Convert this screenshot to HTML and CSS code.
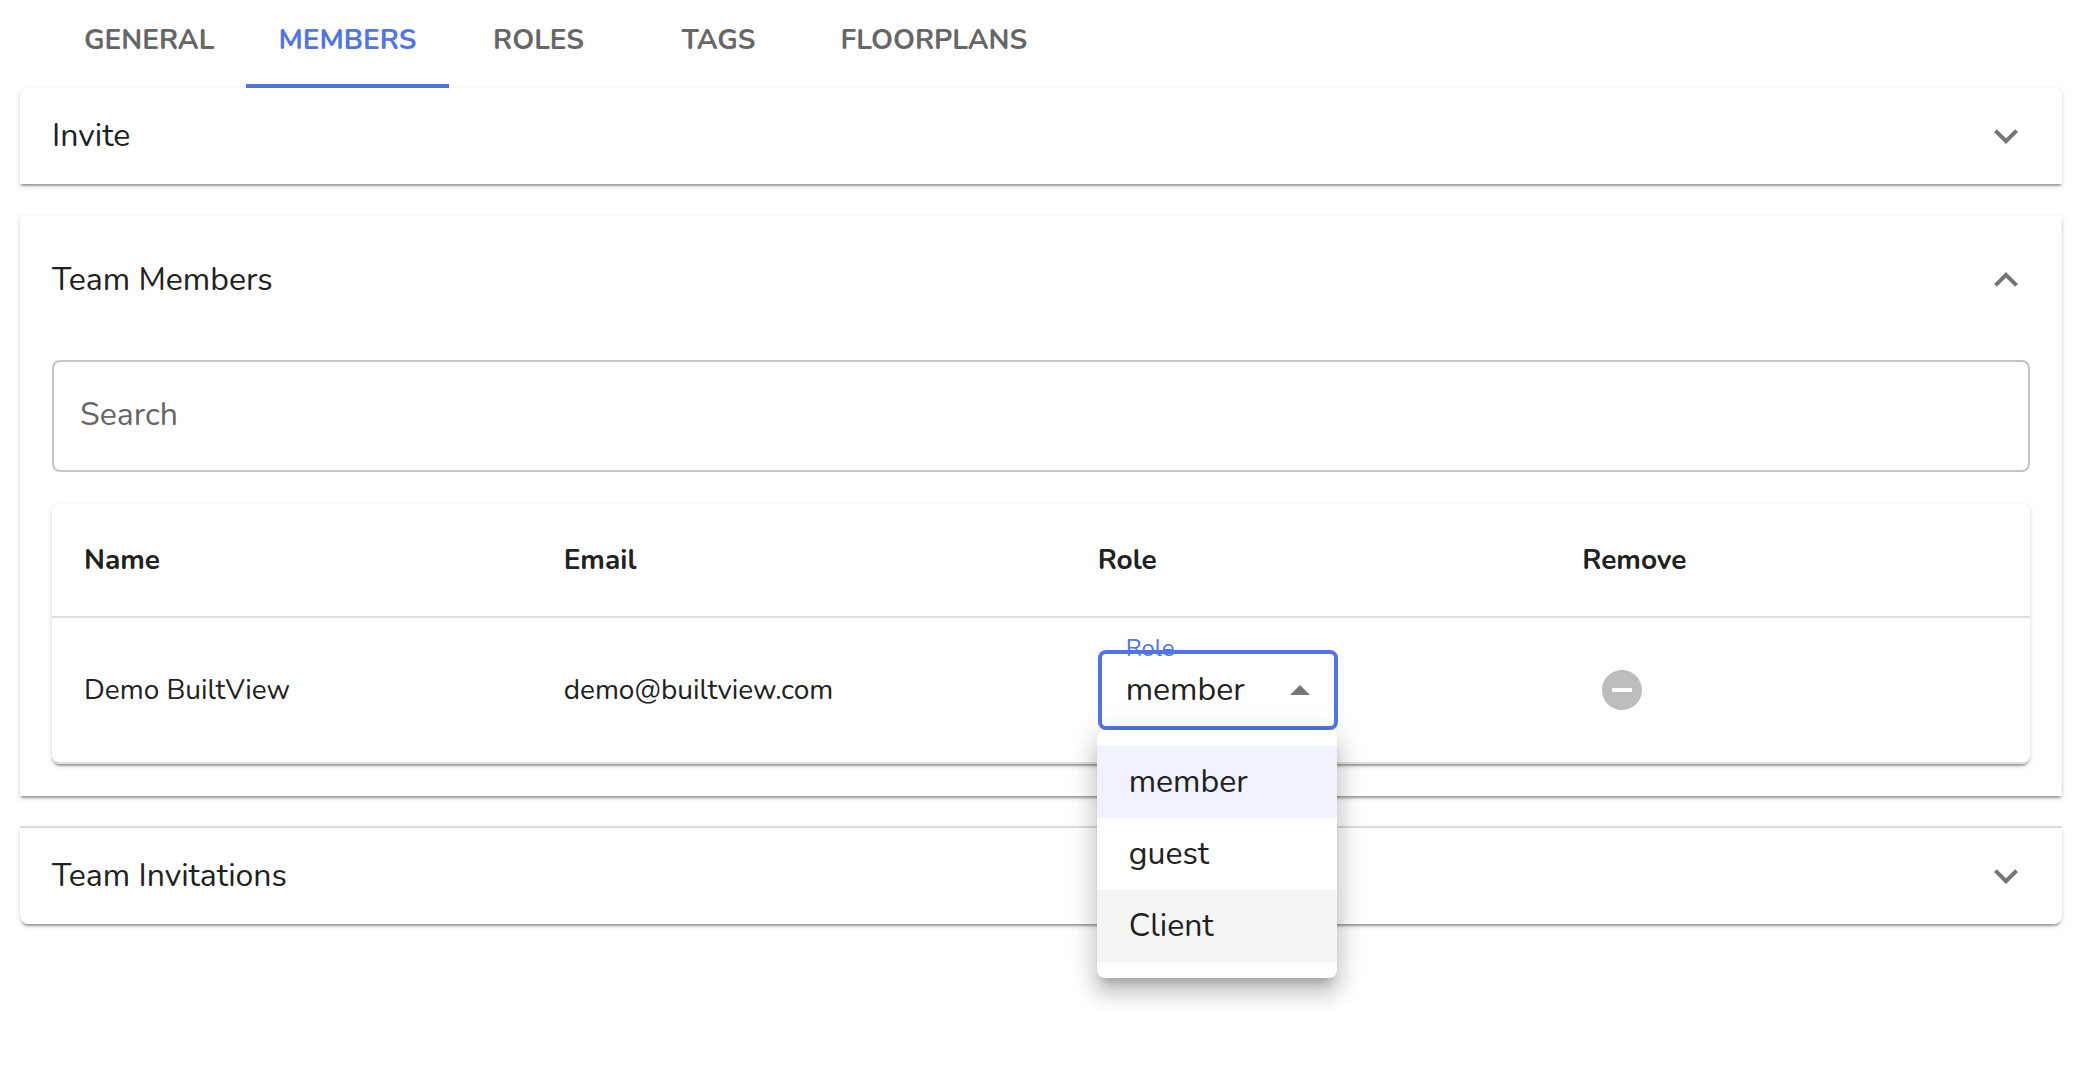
FILE: index.html
```html
<!DOCTYPE html>
<html lang="en">
<head>
<meta charset="utf-8">
<meta name="viewport" content="width=device-width, initial-scale=1">
<title>Members</title>
<link rel="stylesheet" href="styles.css">
</head>
<body>
<nav class="tabs" role="tablist" aria-label="Project settings">
  <button class="tab" type="button" role="tab" aria-selected="false">GENERAL</button>
  <button class="tab tab-active" type="button" role="tab" aria-selected="true">MEMBERS</button>
  <button class="tab" type="button" role="tab" aria-selected="false">ROLES</button>
  <button class="tab" type="button" role="tab" aria-selected="false">TAGS</button>
  <button class="tab" type="button" role="tab" aria-selected="false">FLOORPLANS</button>
</nav>

<main class="panels">
  <section class="panel panel-first">
    <button class="panel-header" type="button" aria-expanded="false">
      <span>Invite</span>
      <svg class="chevron" viewBox="0 0 24 24" aria-hidden="true"><path d="M16.59 8.59 12 13.17 7.41 8.59 6 10l6 6 6-6z"/></svg>
    </button>
  </section>

  <section class="panel panel-open">
    <button class="panel-header panel-header-open" type="button" aria-expanded="true">
      <span>Team Members</span>
      <svg class="chevron" viewBox="0 0 24 24" aria-hidden="true"><path d="m12 8-6 6 1.410 1.410L12 10.830l4.590 4.580L18 14z"/></svg>
    </button>
    <div class="panel-body">
      <input class="search" type="search" placeholder="Search" aria-label="Search">
      <div class="table-card">
        <table class="members">
          <colgroup>
            <col class="col-name"><col class="col-email"><col class="col-role"><col class="col-remove">
          </colgroup>
          <thead>
            <tr><th scope="col">Name</th><th scope="col">Email</th><th scope="col">Role</th><th scope="col">Remove</th></tr>
          </thead>
          <tbody>
            <tr>
              <td>Demo BuiltView</td>
              <td>demo@builtview.com</td>
              <td>
                <div class="role-field">
                  <label class="role-label" for="role">Role</label>
                  <select class="role-select" id="role">
                    <option selected>member</option>
                    <option>guest</option>
                    <option>Client</option>
                  </select>
                  <svg class="role-arrow" viewBox="0 0 20 10" aria-hidden="true"><path d="M0 10 10 0l10 10z"/></svg>
                  <div class="role-menu" role="listbox" aria-label="Role">
                    <button class="role-option role-option-selected" type="button" role="option" aria-selected="true">member</button>
                    <button class="role-option" type="button" role="option" aria-selected="false">guest</button>
                    <button class="role-option role-option-hover" type="button" role="option" aria-selected="false">Client</button>
                  </div>
                </div>
              </td>
              <td>
                <button class="remove" type="button" aria-label="Remove member" disabled>
                  <svg class="remove-icon" viewBox="0 0 24 24" aria-hidden="true"><path d="M12 2C6.480 2 2 6.480 2 12s4.480 10 10 10 10-4.480 10-10S17.520 2 12 2zm5 11H7v-2h10v2z"/></svg>
                </button>
              </td>
            </tr>
          </tbody>
        </table>
      </div>
    </div>
  </section>

  <section class="panel panel-last">
    <button class="panel-header" type="button" aria-expanded="false">
      <span>Team Invitations</span>
      <svg class="chevron" viewBox="0 0 24 24" aria-hidden="true"><path d="M16.59 8.59 12 13.17 7.41 8.59 6 10l6 6 6-6z"/></svg>
    </button>
  </section>
</main>
</body>
</html>
```
FILE: styles.css
```css
:root {
  --primary: #5275e1;
  --text: #212121;
  --muted: #666;
  --icon: #757575;
  --line: #e0e0e0;
  --card-shadow: 0 4px 2px -2px rgba(0, 0, 0, .2), 0 2px 2px rgba(0, 0, 0, .14), 0 2px 6px rgba(0, 0, 0, .12);
}

* {
  box-sizing: border-box;
}

body {
  min-height: 100vh;
  margin: 0;
  padding: 0 30px 0 20px;
  background: #fff;
  color: var(--text);
  font-family: Nunito, Lato, sans-serif;
  font-size: 32px;
  line-height: 48px;
}

button,
input,
select {
  margin: 0;
  border: 0;
  background: none;
  color: inherit;
  font: inherit;
}

/* Tabs */
.tabs {
  display: flex;
  padding-left: 32px;
}

.tab {
  min-width: 180px;
  height: 88px;
  padding: 0 32px 4px;
  border-bottom: 4px solid transparent;
  color: var(--muted);
  font-size: 28px;
  font-weight: 700;
}

.tab-active {
  border-bottom-color: var(--primary);
  color: var(--primary);
}

/* Accordion */
.panels {
  display: flex;
  flex-direction: column;
  gap: 32px;
  padding-bottom: 144px;
}

.panel {
  position: relative;
  background: #fff;
  box-shadow: var(--card-shadow);
}

.panel-first {
  border-radius: 8px 8px 0 0;
}

/* The role menu of the open panel lies over the panel below it */
.panel-open {
  z-index: 1;
}

.panel-last {
  border-radius: 0 0 8px 8px;
}

.panel-last::before {
  content: "";
  position: absolute;
  inset: -2px 0 auto;
  height: 2px;
  background: #dcdcdc;
}

.panel-header {
  display: flex;
  align-items: center;
  justify-content: space-between;
  width: 100%;
  height: 96px;
  padding: 0 32px;
  text-align: left;
}

.panel-header-open {
  height: 128px;
}

.chevron {
  width: 48px;
  height: 48px;
  fill: var(--icon);
}

.panel-body {
  display: flex;
  flex-direction: column;
  gap: 32px;
  padding: 16px 32px 32px;
}

.search {
  appearance: none;
  width: 100%;
  height: 112px;
  padding: 0 26px 4px;
  border: 2px solid #c4c4c4;
  border-radius: 8px;
}

.search::placeholder {
  color: var(--muted);
  opacity: 1;
}

/* Members table */
.table-card {
  border-radius: 8px;
  box-shadow: var(--card-shadow);
}

.members {
  width: 100%;
  border-collapse: separate;
  border-spacing: 0;
  table-layout: fixed;
  font-size: 28px;
}

.col-name { width: 24.25%; }
.col-email { width: 27%; }
.col-role { width: 24.5%; }
.col-remove { width: 24.25%; }

.members th,
.members td {
  padding: 0 32px;
  border-bottom: 2px solid var(--line);
  text-align: left;
  vertical-align: middle;
}

.members th {
  height: 114px;
  font-weight: 700;
}

.members td {
  height: 146px;
}

.members td:first-child {
  border-bottom-left-radius: 8px;
}

.members td:last-child {
  border-bottom-right-radius: 8px;
}

/* Role picker */
.role-field {
  position: relative;
  width: 240px;
  font-size: 32px;
}

.role-select {
  appearance: none;
  display: block;
  width: 100%;
  height: 80px;
  padding: 0 64px 0 24px;
  border: 4px solid var(--primary);
  border-radius: 8px;
}

.role-label {
  position: absolute;
  top: -18px;
  left: 28px;
  color: var(--primary);
  font-size: 24px;
  line-height: 32px;
}

.role-arrow {
  position: absolute;
  top: 35px;
  right: 28px;
  width: 20px;
  height: 10px;
  fill: var(--icon);
}

.role-menu {
  position: absolute;
  z-index: 2;
  top: 100%;
  left: -1px;
  width: 100%;
  padding: 16px 0;
  border-radius: 8px;
  background: #fff;
  box-shadow: 0 10px 10px -6px rgba(0, 0, 0, .2), 0 16px 20px 2px rgba(0, 0, 0, .14), 0 6px 28px 4px rgba(0, 0, 0, .12);
}

.role-option {
  display: block;
  width: 100%;
  height: 72px;
  padding: 0 32px;
  text-align: left;
}

.role-option-selected {
  background: #f0f3fd;
}

.role-option-hover {
  background: #f5f5f5;
}

.remove {
  display: flex;
  padding: 16px;
}

.remove-icon {
  width: 48px;
  height: 48px;
  fill: #bdbdbd;
}
```
